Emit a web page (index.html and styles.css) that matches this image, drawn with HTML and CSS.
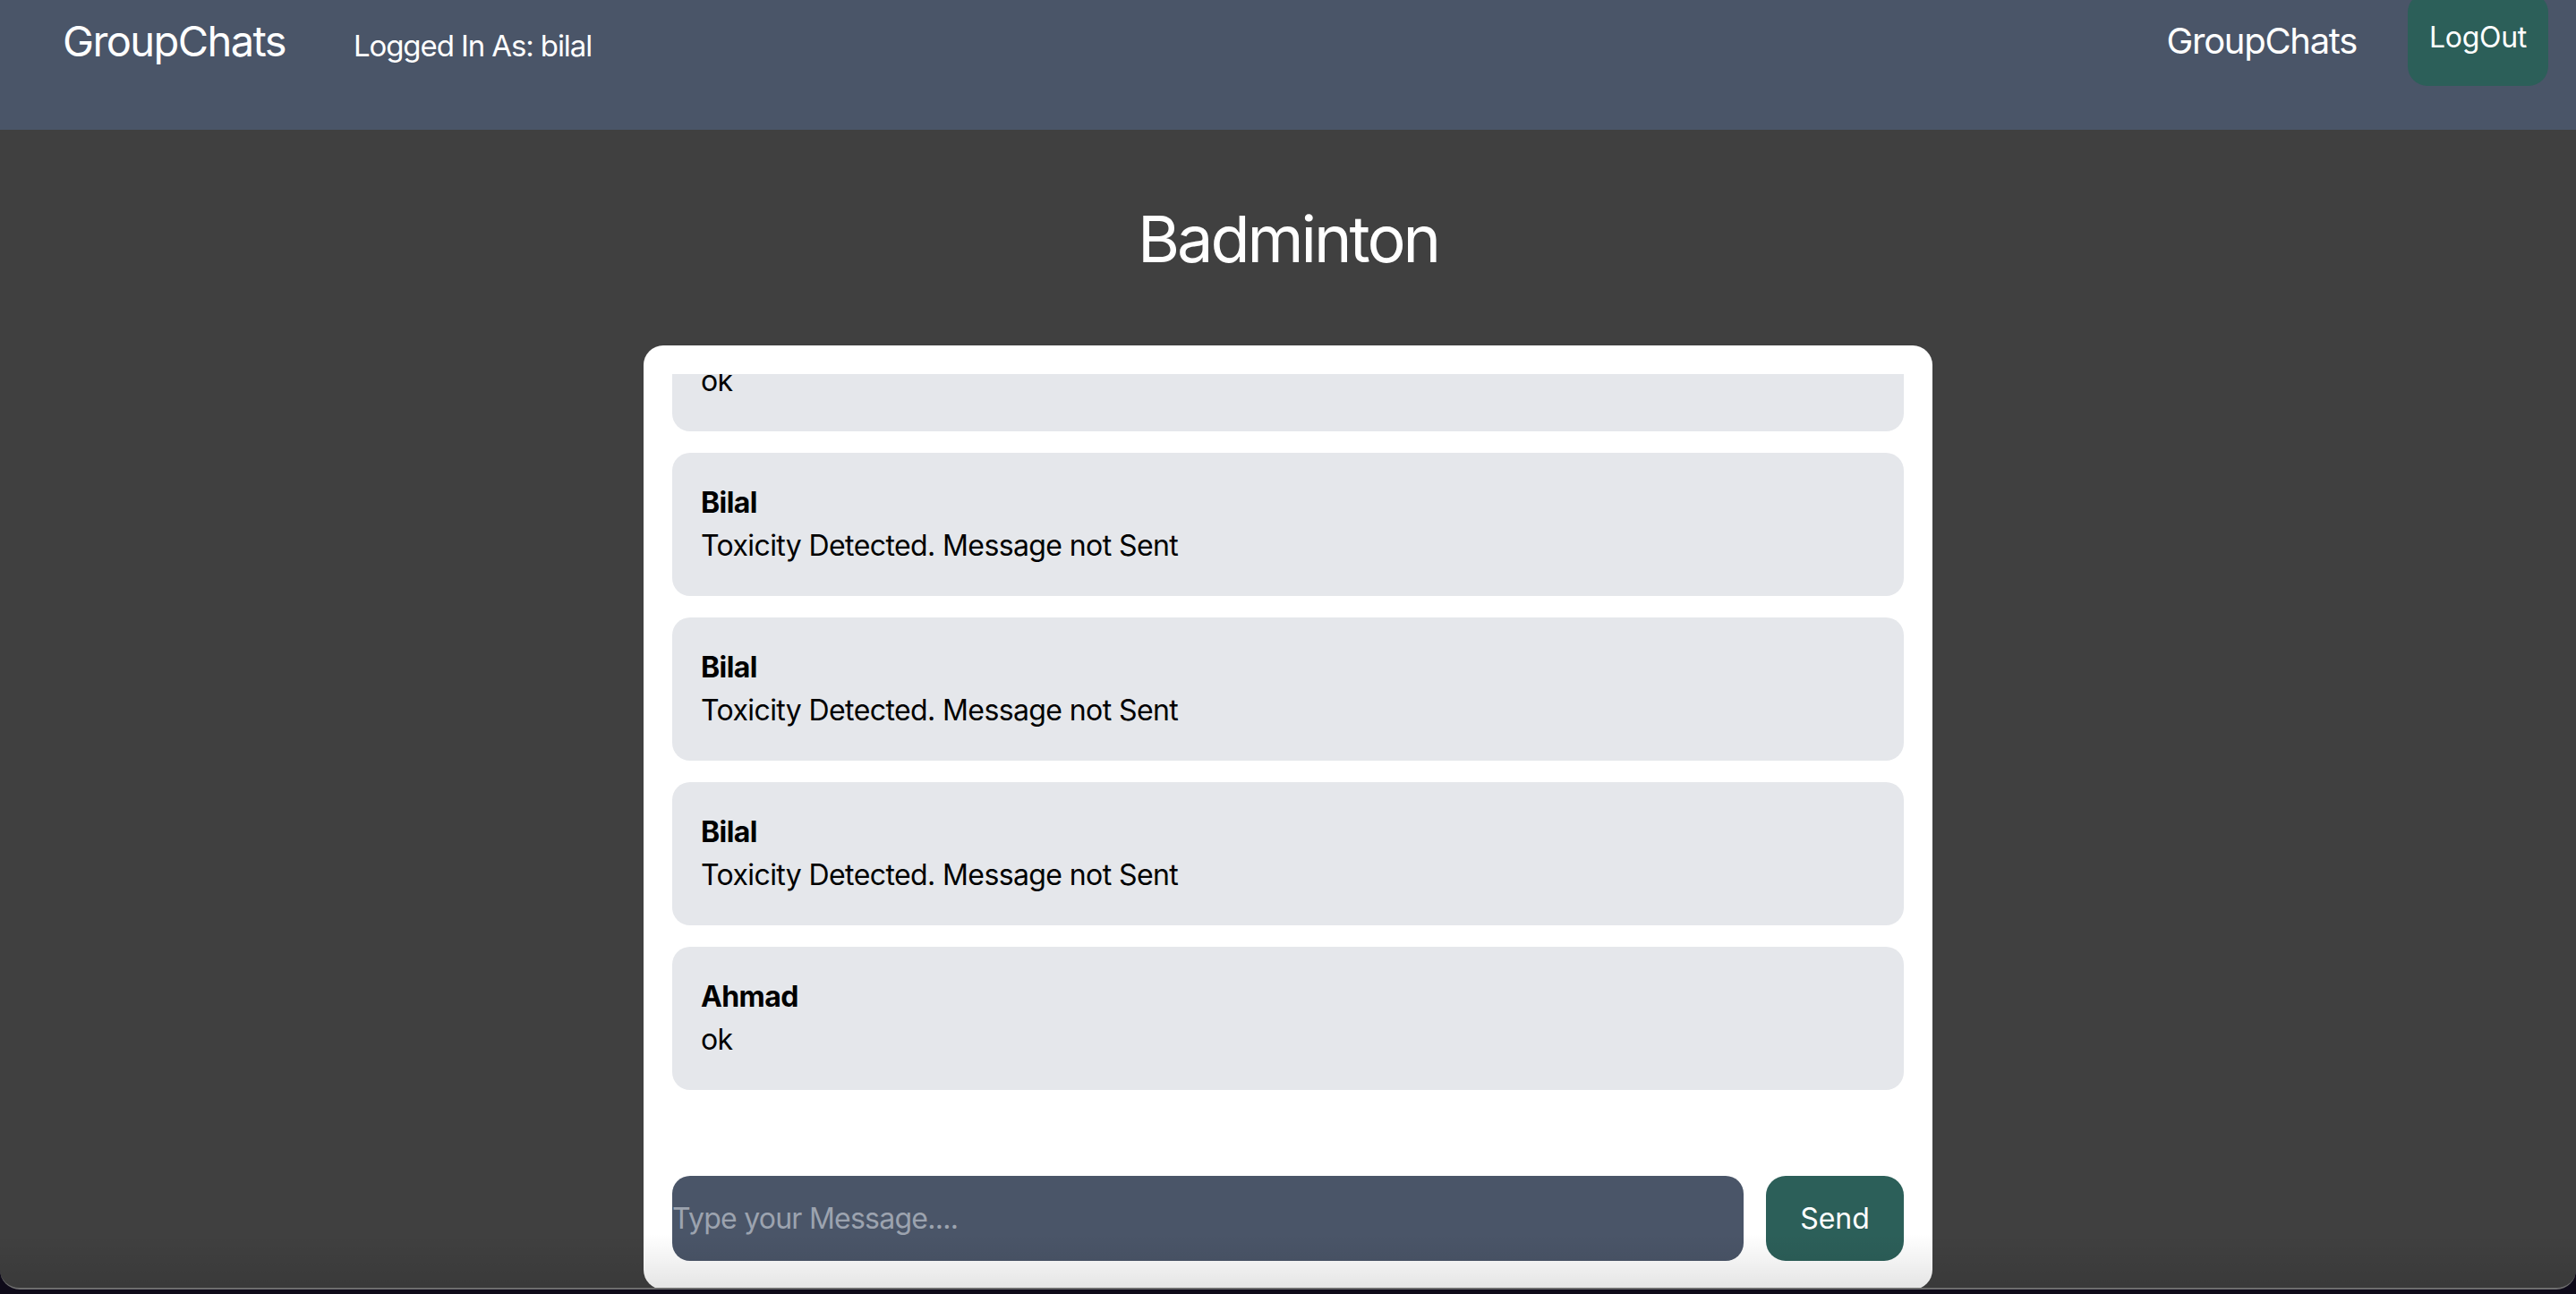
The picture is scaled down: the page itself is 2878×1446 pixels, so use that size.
FILE: index.html
```html
<!DOCTYPE html>
<html lang="en">
<head>
<meta charset="utf-8">
<title>GroupChats - Badminton</title>
<link rel="stylesheet" href="styles.css">
</head>
<body>
<div class="window">
  <header class="topbar">
    <div class="topbar-left">
      <span class="brand">GroupChats</span>
      <span class="user">Logged In As: bilal</span>
    </div>
    <div class="topbar-right">
      <a class="nav-link">GroupChats</a>
      <button class="btn logout">LogOut</button>
    </div>
  </header>

  <main class="main">
    <h1 class="room-title">Badminton</h1>
    <section class="chat-card">
      <div class="messages">
        <div class="msg"><div class="msg-name">Ahmad</div><div class="msg-text">ok</div></div>
        <div class="msg"><div class="msg-name">Bilal</div><div class="msg-text">Toxicity Detected. Message not Sent</div></div>
        <div class="msg"><div class="msg-name">Bilal</div><div class="msg-text">Toxicity Detected. Message not Sent</div></div>
        <div class="msg"><div class="msg-name">Bilal</div><div class="msg-text">Toxicity Detected. Message not Sent</div></div>
        <div class="msg"><div class="msg-name">Ahmad</div><div class="msg-text">ok</div></div>
      </div>
      <form class="composer">
        <input class="composer-input" type="text" placeholder="Type your Message....">
        <button class="btn send" type="button">Send</button>
      </form>
    </section>
  </main>
  <div class="bottom-shade"></div>
</div>
</body>
</html>
```

FILE: styles.css
```css
* { box-sizing: border-box; }

html, body {
  margin: 0;
  padding: 0;
}

body {
  background: #0e0a19;
  font-family: Inter, "Noto Sans", "Liberation Sans", sans-serif;
  height: 1446px;
  overflow: hidden;
}

.window {
  position: relative;
  height: 1441px;
  background: #404040;
  border-radius: 0 0 22px 22px;
  border-bottom: 2px solid #6d6d6d;
  overflow: hidden;
}

.topbar {
  height: 145px;
  background: #4a5568;
  display: flex;
  justify-content: space-between;
  align-items: flex-start;
  padding: 0 31px 0 70px;
  color: #fff;
}

.topbar-left {
  display: flex;
  align-items: baseline;
  gap: 76px;
  padding-top: 14px;
}

.brand {
  font-size: 47px;
  line-height: 64px;
  letter-spacing: -1.6px;
}

.user {
  font-size: 33px;
  line-height: 52px;
  letter-spacing: -1.1px;
}

.topbar-right {
  display: flex;
  align-items: flex-start;
  gap: 57px;
}

.nav-link {
  font-size: 40px;
  line-height: 56px;
  padding-top: 18px;
  letter-spacing: -1.3px;
  color: #fff;
}

.btn {
  border: none;
  color: #fff;
  font-family: inherit;
  background: #2c5f59;
  border-radius: 22px;
  cursor: pointer;
}

.logout {
  margin-top: -8px;
  font-size: 32px;
  line-height: 48px;
  padding: 26px 24px 30px;
  letter-spacing: -0.3px;
}

.main {
  display: flex;
  flex-direction: column;
  align-items: center;
}

.room-title {
  margin: 82px 0 79px;
  font-size: 72px;
  line-height: 80px;
  font-weight: 400;
  letter-spacing: -3px;
  color: #fff;
}

.chat-card {
  width: 1440px;
  background: #fff;
  border-radius: 22px;
  padding: 32px;
}

.messages {
  height: 824px;
  overflow: hidden;
  display: flex;
  flex-direction: column;
  justify-content: flex-end;
}

.msg {
  flex: none;
  background: #e5e7eb;
  border-radius: 20px;
  padding: 32px;
  margin-bottom: 24px;
  color: #000;
  font-size: 32px;
  line-height: 48px;
  letter-spacing: -0.6px;
}

.msg-name {
  font-weight: 700;
}

.composer {
  margin-top: 72px;
  display: flex;
  gap: 25px;
}

.composer-input {
  flex: 1;
  height: 95px;
  border: none;
  border-radius: 20px;
  background: #4a5568;
  color: #fff;
  font-family: inherit;
  font-size: 32px;
  letter-spacing: -0.75px;
  padding: 0;
  outline: none;
}

.composer-input::placeholder {
  color: #9ca3af;
}

.send {
  width: 154px;
  height: 95px;
  font-size: 32px;
  line-height: 48px;
}

.bottom-shade {
  position: absolute;
  left: 0;
  right: 0;
  bottom: 0;
  height: 60px;
  background: linear-gradient(to bottom, rgba(0,0,0,0), rgba(0,0,0,0.1));
  pointer-events: none;
}
```
